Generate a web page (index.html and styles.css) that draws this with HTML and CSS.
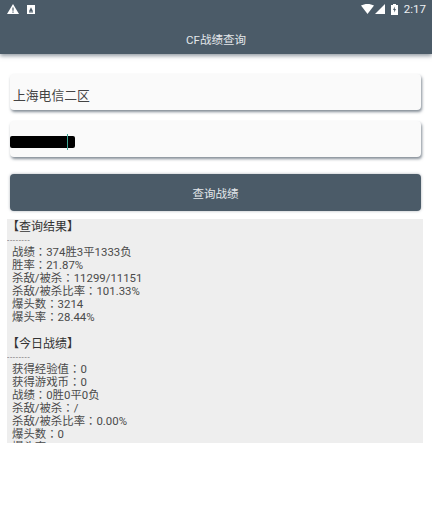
FILE: index.html
```html
<!DOCTYPE html>
<html lang="zh-CN">
<head>
    <meta charset="UTF-8">
    <meta name="viewport" content="width=device-width, initial-scale=1.0">
    <title>CF战绩查询</title>
    <link rel="stylesheet" href="styles.css">
</head>
<body>
    <header class="app-bar">
        <div class="status-bar">
            <div class="status-left">
                <svg class="icon-warn" width="12" height="10" viewBox="0 0 12 10"><path fill="#fff" fill-rule="evenodd" d="M6 0l6 10H0zM5.400 3.500v3.200h1.200V3.500zM5.400 7.500v1.200h1.200V7.500z"/></svg>
                <svg class="icon-note" width="8" height="9" viewBox="0 0 8 9"><path fill="#fff" fill-rule="evenodd" d="M0 0h8v9H0zM4 2.200L2 6.200h4zM2 6.600v.8h4v-.8z"/></svg>
            </div>
            <div class="status-right">
                <svg width="13" height="10" viewBox="0 0 13 10"><path fill="#fff" d="M0 1.600C1.800.5 4 0 6.500 0S11.200.5 13 1.600L6.500 10z"/></svg>
                <svg width="10" height="10" viewBox="0 0 10 10"><path fill="#fff" d="M10 0v10H0z"/></svg>
                <svg class="icon-battery" width="7" height="11" viewBox="0 0 7 11"><path fill="#fff" fill-rule="evenodd" d="M2 0h3v1h2v10H0V1h2zM3.800 2.500L2 6h1.200v2.500L5 5H3.800z"/></svg>
                <span class="clock">2:17</span>
            </div>
        </div>
        <h1 class="app-title">CF战绩查询</h1>
    </header>

    <main class="content">
        <div class="field">上海电信二区</div>
        <div class="field field-account">
            <span class="redacted"><i class="cursor"></i></span>
        </div>
        <button class="query-button">查询战绩</button>

        <section class="result">
            <h2 class="result-title">【查询结果】</h2>
            <div class="dashes">--------</div>
            <ul class="stats">
                <li>战绩<span class="colon" lang="zh-TW">：</span>374胜3平1333负</li>
                <li>胜率<span class="colon" lang="zh-TW">：</span>21.87%</li>
                <li>杀敌/被杀<span class="colon" lang="zh-TW">：</span>11299/11151</li>
                <li>杀敌/被杀比率<span class="colon" lang="zh-TW">：</span>101.33%</li>
                <li>爆头数<span class="colon" lang="zh-TW">：</span>3214</li>
                <li>爆头率<span class="colon" lang="zh-TW">：</span>28.44%</li>
            </ul>
            <h2 class="result-title result-today">【今日战绩】</h2>
            <div class="dashes">--------</div>
            <ul class="stats">
                <li>获得经验值<span class="colon" lang="zh-TW">：</span>0</li>
                <li>获得游戏币<span class="colon" lang="zh-TW">：</span>0</li>
                <li>战绩<span class="colon" lang="zh-TW">：</span>0胜0平0负</li>
                <li>杀敌/被杀<span class="colon" lang="zh-TW">：</span>/</li>
                <li>杀敌/被杀比率<span class="colon" lang="zh-TW">：</span>0.00%</li>
                <li>爆头数<span class="colon" lang="zh-TW">：</span>0</li>
                <li>爆头率<span class="colon" lang="zh-TW">：</span>0.00%</li>
            </ul>
        </section>
    </main>
</body>
</html>
```

FILE: styles.css
```css
body {
    font-family: Roboto, "Noto Sans CJK SC", sans-serif;
    margin: 0;
    padding: 0;
    height: 517px;
    overflow: hidden;
    background: #fff;
}
.app-bar {
    height: 54px;
    background: #4b5b68;
    color: #e4e8eb;
    box-shadow: 0px 2px 4px rgba(60, 75, 90, 0.55);
}
.status-bar {
    height: 18px;
    padding: 0 6px 0 7px;
    display: flex;
    justify-content: space-between;
    align-items: center;
}
.status-left {
    display: flex;
    align-items: center;
    gap: 8px;
}
.status-right {
    display: flex;
    align-items: center;
    gap: 1px;
}
.icon-battery {
    margin-left: 5px;
}
.clock {
    font-size: 11.500px;
    margin-left: 5px;
    color: #eef1f3;
}
.app-title {
    margin: 0;
    padding-top: 15px;
    font-size: 11.500px;
    line-height: 14px;
    font-weight: 400;
    text-align: center;
}
.content {
    padding: 20px 11px 0 10px;
}
.field {
    height: 36px;
    line-height: 43px;
    padding-left: 3px;
    margin-bottom: 11px;
    background: #fafafa;
    border-radius: 4px;
    font-size: 12.800px;
    color: #444;
    box-shadow: 1px 2px 3px rgba(50, 65, 80, 0.6);
}
.field-account {
    display: flex;
    align-items: center;
    margin-bottom: 17px;
    padding-left: 0;
}
.redacted {
    position: relative;
    display: block;
    width: 65px;
    height: 12px;
    margin-top: 6px;
    background: #000;
    border-radius: 2px;
}
.cursor {
    position: absolute;
    left: 57px;
    top: -2px;
    width: 1px;
    height: 16px;
    background: #3fa796;
}
.query-button {
    display: block;
    width: 100%;
    height: 37px;
    padding: 0;
    border: none;
    border-radius: 4px;
    background: #4b5b68;
    color: #e4e8eb;
    font-family: inherit;
    font-size: 11.500px;
    box-shadow: 0px 0px 3px rgba(50, 65, 80, 0.4);
}
.result {
    margin: 8px -2px 0 -3px;
    height: 224px;
    overflow: hidden;
    background: #eeeeee;
    color: #4a4a4a;
    font-size: 11.400px;
    line-height: 13px;
}
.result-title {
    margin: 0;
    padding-top: 2px;
    font-size: 12px;
    line-height: 13px;
    font-weight: 400;
    color: #333;
}
.result-today {
    padding-top: 14px;
}
.dashes {
    height: 10px;
    font-size: 8px;
    line-height: 9px;
    letter-spacing: 0.700px;
    color: #666;
    overflow: hidden;
    margin-top: 2px;
}
.stats {
    margin: 0;
    padding: 0 0 0 5px;
    list-style: none;
}
.colon {
    font-family: "Noto Sans CJK TC", sans-serif;
    line-height: 0;
}
```
